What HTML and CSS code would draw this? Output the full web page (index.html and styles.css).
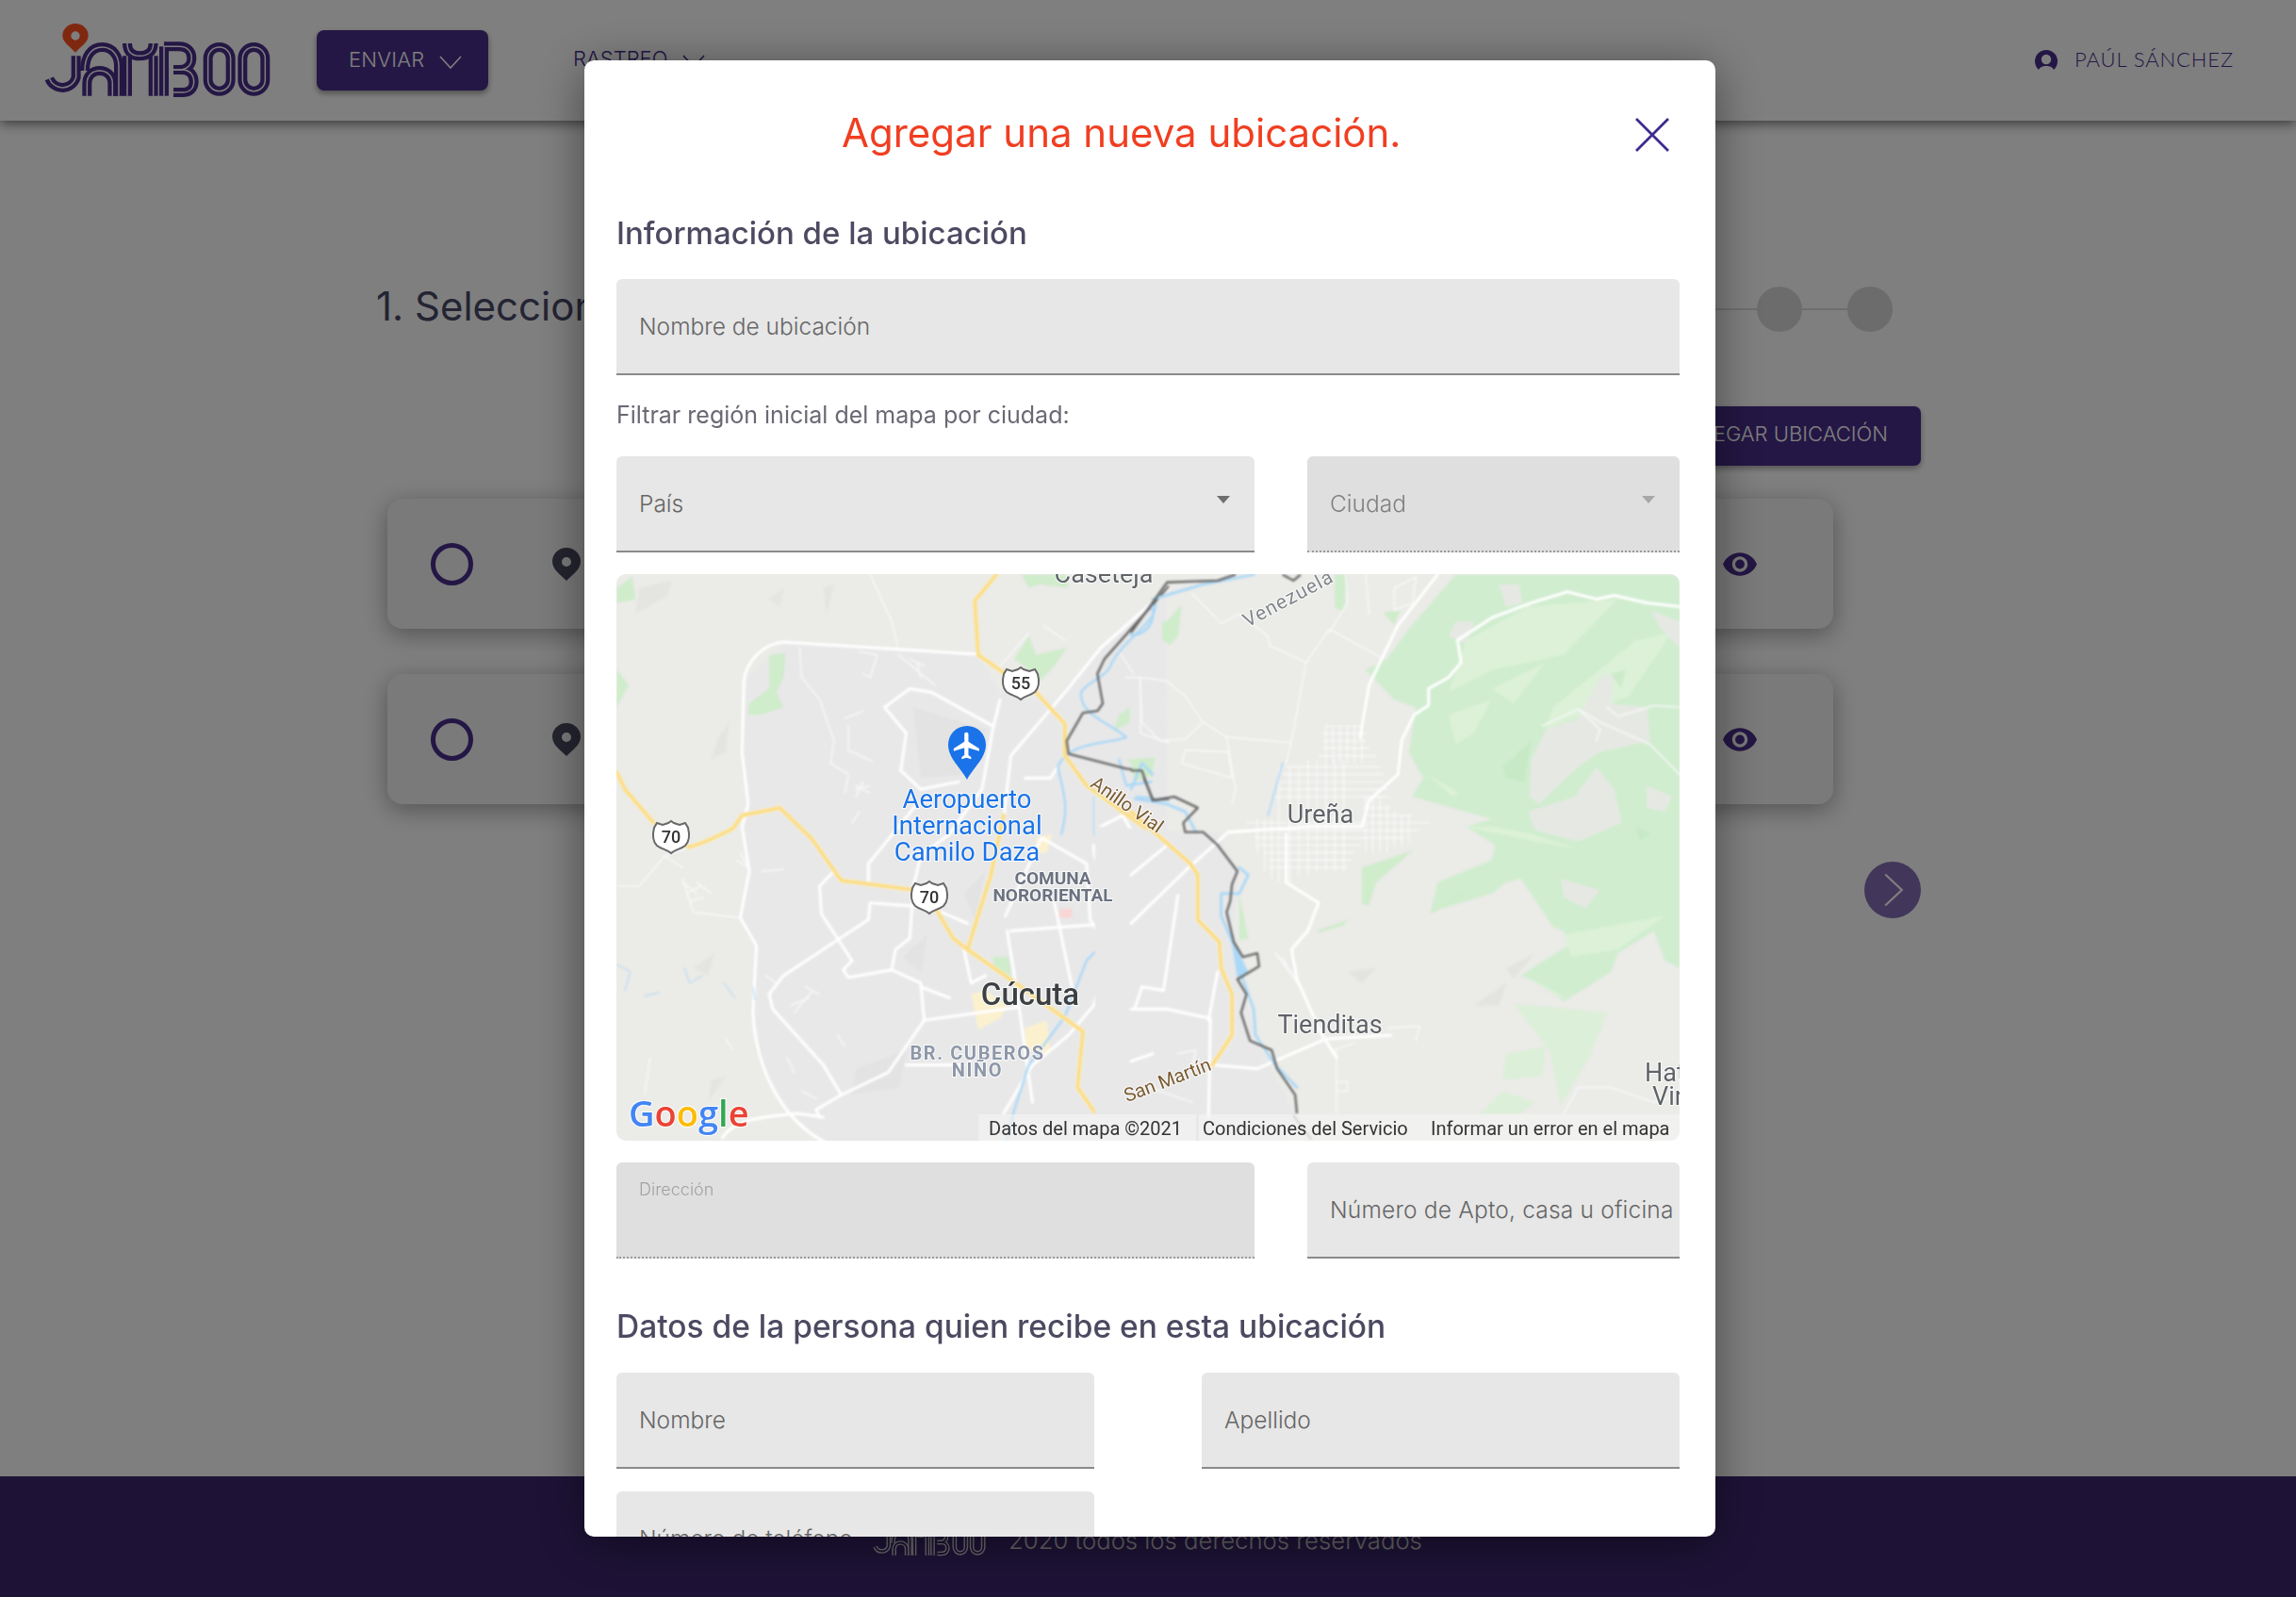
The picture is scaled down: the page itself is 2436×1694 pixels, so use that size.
FILE: index.html
```html
<!DOCTYPE html>
<html lang="es">
<head>
<meta charset="utf-8">
<title>Jamboo</title>
<link rel="stylesheet" href="styles.css">
</head>
<body>
<svg class="defs" width="0" height="0" aria-hidden="true">
  <defs>
    <g id="jamboo-lines">
      <path d="M122 118V187A45 45 0 0 1 37 190"/>
      <path d="M150 165C150 120 170 90 205 90S258 120 258 150V245"/>
      <path d="M157 245V205C157 180 175 165 197 165S238 180 238 205V245"/>
      <path d="M285 78C285 105 300 118 325 118S368 105 368 78"/>
      <path d="M285 118V245M368 118V245"/>
      <path d="M402 88V245"/>
      <path d="M402 88H450C478 88 490 105 490 125S478 162 450 162H432"/>
      <path d="M432 162H460C485 162 497 180 497 200S485 234 460 234H432"/>
      <rect x="542" y="90" width="72" height="140" rx="36"/>
      <rect x="652" y="90" width="72" height="140" rx="36"/>
    </g>
    <g id="shield">
      <path d="M-15 -15L-9 -13L-3 -15L0 -17L3 -15L9 -13L15 -15L18 -10C20 -2 19 5 15 9C10 13 4 13 0 17C-4 13 -10 13 -15 9C-19 5 -20 -2 -18 -10Z" fill="#fff" stroke="#686868" stroke-width="2"/>
    </g>
    <g id="hw-left" fill="none" stroke-linecap="round" stroke-linejoin="round">
      <path d="M1090 24L1030 95L1040 240L1115 290M1200 340L1280 425L1280 510L1340 590L1568 750"/>
      <path d="M38 555L60 600L140 690M235 755C270 750 330 720 360 705L385 670L490 650L580 735L660 845L860 870"/>
      <path d="M925 925L970 1000L1010 1030L1150 1125L1330 1250L1315 1400L1400 1520"/>
      <path d="M1110 670L1075 830L1010 1030"/>
      <path d="M1450 1430V1560"/>
    </g>
    <g id="hw-right" fill="none" stroke-linecap="round" stroke-linejoin="round">
      <path d="M0 660L165 800L185 830L185 950L245 1010L250 1080L280 1150L280 1260L225 1340"/>
    </g>
  </defs>
</svg>

<div class="page">
  <header class="topbar">
    <svg class="logo" viewBox="0 0 780 270">
      <g class="logo-wide"><use href="#jamboo-lines"/></g>
      <g class="logo-thin"><use href="#jamboo-lines"/></g>
      <path class="logo-pin" d="M120 107C100 85 79 74 79 53A41 38 0 0 1 161 53C161 74 140 85 120 107ZM120 40A14 14 0 1 0 120 68A14 14 0 1 0 120 40Z"/>
    </svg>
    <button class="send-btn">ENVIAR
      <svg class="chev" viewBox="0 0 24 14"><path d="M1 1L12 13L23 1"/></svg>
    </button>
    <div class="track">RASTREO
      <svg class="chev" viewBox="0 0 24 14"><path d="M1 1L12 13L23 1"/></svg>
    </div>
    <div class="user">
      <svg class="user-icon" viewBox="0 0 24 24"><circle cx="12" cy="12" r="12" class="user-disc"/><circle cx="12" cy="10" r="5.200" class="user-face"/><path class="user-face" d="M3 24C4 18 8 17 12 17S20 18 21 24Z"/></svg>
      <span>PAÚL SÁNCHEZ</span>
    </div>
  </header>

  <main class="content">
    <div class="step-row">
      <h1 class="step-title">1. Selecciona el punto de recogida</h1>
      <div class="stepper">
        <span class="step-line"></span><span class="step-dot"></span><span class="step-line short"></span><span class="step-dot"></span>
      </div>
    </div>
    <div class="add-row"><button class="add-btn">AGREGAR UBICACIÓN</button></div>
    <div class="cards">
      <div class="card">
        <span class="radio"></span>
        <svg class="pin" viewBox="0 0 30 35"><path d="M15 35C8 28 0 23 0 14.500A15 14.500 0 0 1 30 14.500C30 23 22 28 15 35ZM15 10A5 5 0 1 0 15 20A5 5 0 1 0 15 10Z" fill-rule="evenodd"/></svg>
        <svg class="eye" viewBox="1 4.500 22 15"><path d="M12 4.500C7 4.500 2.730 7.610 1 12c1.730 4.390 6 7.500 11 7.500s9.270-3.110 11-7.500c-1.730-4.390-6-7.500-11-7.500zM12 17c-2.760 0-5-2.240-5-5s2.240-5 5-5 5 2.240 5 5-2.240 5-5 5zm0-8c-1.660 0-3 1.340-3 3s1.340 3 3 3 3-1.340 3-3-1.340-3-3-3z"/></svg>
      </div>
      <div class="card">
        <span class="radio"></span>
        <svg class="pin" viewBox="0 0 30 35"><path d="M15 35C8 28 0 23 0 14.500A15 14.500 0 0 1 30 14.500C30 23 22 28 15 35ZM15 10A5 5 0 1 0 15 20A5 5 0 1 0 15 10Z" fill-rule="evenodd"/></svg>
        <svg class="eye" viewBox="1 4.500 22 15"><path d="M12 4.500C7 4.500 2.730 7.610 1 12c1.730 4.390 6 7.500 11 7.500s9.270-3.110 11-7.500c-1.730-4.390-6-7.500-11-7.500zM12 17c-2.760 0-5-2.240-5-5s2.240-5 5-5 5 2.240 5 5-2.240 5-5 5zm0-8c-1.660 0-3 1.340-3 3s1.340 3 3 3 3-1.340 3-3-1.340-3-3-3z"/></svg>
      </div>
    </div>
    <div class="next-row">
      <button class="next-btn"><svg viewBox="0 0 20 32"><path d="M2 1L18 16L2 31"/></svg></button>
    </div>
  </main>

  <footer class="footer">
    <svg class="footer-logo" viewBox="0 0 780 270">
      <g class="flogo-wide"><use href="#jamboo-lines"/></g>
      <g class="flogo-thin"><use href="#jamboo-lines"/></g>
    </svg>
    <span>2020 todos los derechos reservados</span>
  </footer>
</div>

<div class="overlay">
  <section class="modal">
    <div class="modal-head">
      <h2 class="modal-title">Agregar una nueva ubicación.</h2>
      <svg class="close" viewBox="0 0 36 36"><path d="M1 1L35 35M35 1L1 35"/></svg>
    </div>
    <h3 class="section-title first">Información de la ubicación</h3>
    <div class="field gap-a"><span>Nombre de ubicación</span></div>
    <p class="hint">Filtrar región inicial del mapa por ciudad:</p>
    <div class="row-wide gap-a">
      <div class="field select"><span>País</span><i class="caret"></i></div>
      <div class="field select disabled"><span>Ciudad</span><i class="caret"></i></div>
    </div>

    <div class="map">
      <svg class="map-art" viewBox="0 0 1128 601">
        <rect width="1128" height="601" fill="#ebebe8"/>
        <g class="map-ground">
        <!-- left half, drawn in the 3x crop coordinates -->
        <g transform="translate(-14 -9) scale(.3827 .3953)">
          <g fill="#e4e4e1">
            <path d="M100 60L190 40L180 80L90 130Z"/>
            <path d="M320 460L350 420L340 500L300 520Z"/>
            <path d="M450 500L520 450L500 540L430 560Z"/>
            <path d="M250 1080L310 1040L290 1100Z"/>
            <path d="M610 60L640 50L620 130Z"/>
            <path d="M460 90L500 60L490 110Z"/>
            <path d="M300 1380L340 1370L290 1440Z"/>
          </g>
          <path fill="#e8e8e9" d="M400 300L500 210L1040 240L1100 340L1250 360L1400 200L1560 80L1568 1560L640 1560L520 1470L440 1340L415 1200L425 1020L380 950L405 820L385 700L400 640L385 500Z"/>
          <g fill="#e3e3e3">
            <path d="M860 380L1060 440L1010 560L880 570Z"/>
            <path d="M700 1350L840 1300L820 1400L690 1420Z"/>
            <path d="M830 1050L900 990L880 1090Z"/>
            <path d="M1000 880L1060 820L1030 950Z"/>
          </g>
          <g fill="#cfeccb">
            <path d="M38 60L80 30L90 90L38 100Z"/>
            <path d="M460 240L505 235L500 300L480 340L500 380L440 400L400 400L405 370L460 330Z"/>
            <path d="M38 280L70 320L38 380Z"/>
            <path d="M1160 24L1280 24L1290 60L1210 50L1180 60Z"/>
            <path d="M1180 190L1200 240L1285 220L1250 270L1200 320L1180 280L1140 250Z"/>
            <path d="M1460 380L1460 420L1415 445L1430 400Z"/>
            <path d="M1550 150L1568 150L1568 210L1550 200Z"/>
            <path d="M1450 520L1530 515L1520 570L1490 550Z"/>
            <path d="M1080 1050L1125 1050L1130 1100L1085 1090Z"/>
          </g>
          <g fill="#fbf1cf">
            <path d="M1020 1150L1060 1140L1120 1180L1100 1215L1040 1245L1030 1200Z"/>
            <path d="M1170 1240L1230 1220L1240 1310L1170 1300Z"/>
            <path d="M1200 730L1245 720L1230 770L1200 770Z"/>
          </g>
          <path fill="#f9d6d6" d="M1265 920H1300V945H1265Z"/>
          <g fill="none" stroke="#f8f8f8" stroke-linecap="round" stroke-linejoin="round" stroke-width="4">
            <path d="M740 24L800 150L820 230"/>
            <path d="M545 220L550 300L600 360L640 470L630 530L680 560L670 610"/>
            <path d="M670 410L720 390M680 430L680 495L745 525M700 590L740 610M690 690L710 660"/>
            <path d="M240 755L170 780L100 860L40 860M170 780L220 810M220 840L250 930L380 945"/>
            <path d="M220 850L260 880M230 880L270 860M240 900L280 890M260 850L300 880"/>
            <path d="M370 790L400 810M380 770L395 800M440 820L500 815"/>
            <path d="M1450 300L1490 300L1490 450L1568 475M1430 230L1470 290"/>
            <path d="M1220 160L1280 200M1100 270L1180 180"/>
            <path d="M130 1320L115 1420"/>
            <path d="M820 240L880 290L920 320M850 250L890 270M870 260L880 300"/>
            <path d="M710 230L760 240L740 300L720 290"/>
            <path d="M520 1180L570 1160M530 1200L580 1140M560 1130L600 1150M450 1100L480 1120"/>
            <path d="M510 1320L530 1360M550 1410L590 1430M650 1260L670 1290M340 1270L360 1300"/>
            <path d="M700 600L740 590M720 580L700 620"/>
          </g>
          <g fill="none" stroke="#fff" stroke-linecap="round" stroke-linejoin="round" stroke-width="8">
            <path d="M1040 238L500 205C440 210 395 260 390 310L385 500L402 640L385 700L405 820L380 945L425 1020L415 1200C425 1360 500 1500 640 1560"/>
            <path d="M1100 360L1080 440L1050 600L960 720L880 780L860 860L850 1000L810 1030L800 1085L680 1105L665 1085L690 1060L605 935L600 860L640 820"/>
            <path d="M780 380L850 330L910 340L1080 430M780 380L840 450L825 550L880 600L985 580"/>
            <path d="M1568 60L1380 220L1280 340L1130 510L1115 640M1115 640L1110 680"/>
            <path d="M735 855V800L870 640M740 905L735 950L500 1100L460 1150L470 1190L610 1340L660 1420L590 1460L600 1480"/>
            <path d="M740 905L880 915M925 925L1010 960"/>
            <path d="M1130 980L1410 960M1115 940L1215 730L1340 800L1350 950L1400 1030"/>
            <path d="M1568 870L1410 1020L1370 1195L1568 1190M1400 1030L1360 1180L1290 1260L1190 1340L1110 1470"/>
            <path d="M1120 980L1145 1130L1190 1440M1250 900L1310 1180M1000 1030L1020 1120L1060 1100"/>
            <path d="M800 1085L880 1120L890 1220L1150 1185M880 1130L960 1160"/>
            <path d="M890 1220L790 1360L660 1420M840 1340H1000"/>
            <path d="M330 1535C360 1490 420 1480 540 1470L610 1480"/>
            <path d="M1360 750C1350 850 1500 850 1568 800M1380 700L1440 670L1500 770"/>
            <path d="M1170 570L1240 570L1260 540"/>
          </g>
          <g fill="none" stroke="#aad8f7" stroke-linecap="round" stroke-linejoin="round" stroke-width="6">
            <path d="M1530 100C1540 150 1450 190 1410 260C1400 300 1340 310 1325 340C1320 400 1400 420 1450 460C1400 480 1290 470 1260 540C1280 620 1290 650 1270 720"/>
            <path d="M1430 520L1450 590L1520 580M1480 620L1568 630"/>
            <path d="M1420 920L1400 1000L1340 1060L1280 1210L1180 1340L1140 1460L1120 1540"/>
            <path d="M1360 620L1360 720L1400 760" stroke-width="3"/>
            <path d="M38 1070L75 1090L60 1140M115 1155L155 1145M225 1080L240 1120L275 1100M335 1120L365 1160M415 1130L420 1165" stroke-width="2.500"/>
          </g>
          <use href="#hw-left" class="hw-case"/>
          <use href="#hw-left" class="hw-fill"/>
          <path class="border-line" d="M1568 55L1500 130L1390 250L1370 290L1385 370L1370 390L1330 395L1285 470L1290 505L1450 545L1490 550L1525 630L1568 625"/>
        </g>

        <!-- right half, drawn in the 3x crop coordinates -->
        <g transform="translate(546 -9) scale(.3827 .3953)">
          <path fill="#e8e8e9" d="M-100 700L240 720L300 820L280 1010L350 1280L460 1480L400 1560L-100 1560Z"/>
          <path fill="#d0edcf" d="M770 170L900 24L1521 24L1521 1080L1480 1060L1450 980L1350 1040L1330 1090L1200 1170L1150 1130L1080 1100L1210 1020L1200 980L1170 970L1130 910L1080 840L1040 850L1000 880L830 930L850 850L1000 790L1010 750L930 700L1000 680L780 620L810 570L770 500L790 380L730 360L650 280L710 250Z"/>
          <g fill="#dcf1d8">
            <path d="M930 200L1100 110L1350 90L1200 240L1000 280L880 340Z"/>
            <path d="M1000 330L1150 260L1060 370Z"/>
            <path d="M1170 380L1400 200L1500 180L1380 350L1150 440Z"/>
            <path d="M1200 990L1480 940L1350 1030L1220 1050Z"/>
            <path d="M920 700L1020 720L1120 740L1240 760L1110 720L1000 700Z"/>
            <path d="M820 560L910 610L890 620Z"/>
            <path d="M880 400L1000 360L950 450L900 480Z"/>
          </g>
          <g fill="#e6e9e3">
            <path d="M1105 620L1110 520L1150 440L1240 410L1300 300L1340 290L1330 370L1430 380L1440 470L1300 500L1240 540L1130 640Z"/>
            <path d="M1230 620L1290 540L1340 600L1360 690L1240 740L1120 710L1100 660Z"/>
            <path d="M1430 590L1500 620L1480 660L1430 650Z"/>
            <path d="M1190 840L1300 870L1260 920L1200 890Z"/>
            <path d="M1020 50L1075 50L1085 100L1040 110Z"/>
            <path d="M900 150L950 150L930 210L880 190Z"/>
            <path d="M1440 120L1521 150L1521 220L1470 170Z"/>
          </g>
          <g fill="#c6e8c3" opacity=".7">
            <path d="M1030 540L1110 470L1090 580L1040 570Z"/>
            <path d="M1330 290L1370 280L1360 330Z"/>
            <path d="M1400 700L1440 720L1410 740Z"/>
          </g>
          <g fill="#cfeccb">
            <path d="M640 810L780 765L680 850L660 910L640 910Z"/>
            <path d="M830 930L930 860L920 890L830 935Z"/>
            <path d="M515 980L600 950L590 965L520 985Z"/>
            <path d="M565 24L600 24L590 125L565 110Z"/>
            <path d="M85 165L140 105L130 190L105 215Z"/>
            <path d="M0 530L50 520L60 560L10 580Z"/>
            <path d="M700 125L745 120L730 160Z"/>
            <path d="M300 880L325 1000L300 1005Z"/>
          </g>
          <g fill="#dcefd8">
            <path d="M1060 1175L1320 1200L1270 1320L1190 1450L1160 1300Z"/>
            <path d="M1040 1310L1150 1290L1140 1370L1030 1380Z"/>
            <path d="M970 1470L1030 1410L1120 1440L1080 1470Z"/>
            <path d="M1090 1100L1150 1130L1230 1170L1170 1150Z"/>
          </g>
          <g fill="#e3e3e0">
            <path d="M1040 1080L1120 1040L1060 1110Z"/>
            <path d="M950 1180L1040 1120L1020 1180Z"/>
            <path d="M600 1090L680 1080L640 1120Z"/>
          </g>
          <g fill="none" stroke="#f8f8f8" stroke-linecap="round" stroke-linejoin="round" stroke-width="4">
            <path d="M170 75L250 155L300 130L380 190L385 215L485 260L550 170L690 245M485 260L445 470L430 530"/>
            <path d="M595 24L600 100L550 180M650 24L660 130M730 60L790 30L780 100L730 120L730 60"/>
            <path d="M25 300L30 420L80 470L150 465L200 420L265 460L445 475M265 460L290 600L280 640M200 420L150 350L100 310L25 300"/>
            <path d="M150 495L270 500L280 570L140 530Z"/>
            <path d="M1140 430L1240 385L1300 440L1290 470M1320 380L1350 405L1450 375L1520 380M1240 385L1300 420L1440 480L1520 560"/>
            <path d="M710 1240L800 1235L790 1275M400 1040L460 1110M570 1300V1470M1240 1400L1330 1400L1450 1440L1521 1420M1240 1400L1200 1470"/>
            <path d="M50 1400L170 1440M130 1310L180 1300L170 1340"/>
            <path d="M400 1040L470 1130M420 1050L440 1090M560 1300L620 1280M570 1385H600V1410H570Z"/>
          </g>
          <!-- Ureña street grid -->
          <g fill="none" stroke="#fbfbfb" stroke-width="3">
            <path d="M540 430H640M530 450H650M530 470H650M530 490H660M520 510H680M430 540H690M420 560H700M415 580H700M410 600H710M400 620H715M320 690H830M340 710H800M340 730H760M350 750H640M370 770H620M380 790H610M380 810H600M640 650H720M650 670H780"/>
            <path d="M540 430V530M560 430V530M580 430V530M600 430V530M620 430V530M640 430V530M350 680V770M370 680V820M390 680V840M410 540V850M440 540V850M465 540V830M490 520V830M515 520V820M540 520V820M565 520V820M590 520V820M650 620V770M670 620V770M690 620V770M710 640V770M730 660V750M750 670V750M770 670V740"/>
          </g>
          <g fill="none" stroke="#fff" stroke-linecap="round" stroke-linejoin="round" stroke-width="8">
            <path d="M850 24L740 160L660 320L635 460"/>
            <path d="M1521 110L1430 100L1340 80L1290 90L1210 70L1110 100L1000 140L905 200L915 260L880 300L825 330L825 375L785 400L750 470L740 560L660 630L640 700L500 700L270 715L160 810L0 960"/>
            <path d="M430 850L520 905L490 980L445 1030L460 1110L530 1260L570 1320"/>
            <path d="M230 1340L350 1350L540 1270L720 1260"/>
            <path d="M0 830L100 750M0 1190L100 1190L220 1215L215 1480M240 1090L215 1220"/>
            <path d="M130 885L90 1140L30 1130L10 1190"/>
            <path d="M0 1330L60 1310"/>
            <path d="M430 720V850"/>
          </g>
          <g fill="none" stroke="#aad8f7" stroke-linecap="round" stroke-linejoin="round" stroke-width="7">
            <path d="M60 110C70 170 20 190 0 185M60 90L200 50L340 24"/>
            <path d="M60 560L30 530L0 600M10 625L100 640L150 660L180 715"/>
            <path d="M300 810L325 830L300 880L250 880L250 940L290 1030L310 1110L340 1190L345 1260L400 1340L460 1400"/>
            <path d="M420 530L380 670" stroke-width="4"/>
          </g>
          <path fill="#aad8f7" d="M265 920L290 1020L325 1090L295 1110Z"/>
          <use href="#hw-right" class="hw-case"/>
          <use href="#hw-right" class="hw-fill"/>
          <path class="border-line" d="M0 180L100 45L240 40L290 24M420 24L450 40L470 24M0 550L30 550L60 630L120 620L185 650L145 690L150 715L200 715L240 750L295 820L280 855L275 900L265 930L285 1010L310 1050L350 1040L355 1075L295 1110L320 1150L305 1200L330 1275L390 1300L405 1350L455 1420L460 1470"/>
          <path fill="none" stroke="#9a9a9a" stroke-width="5" d="M450 1475L500 1540"/>
        </g>
        </g>

        <g class="map-labels">
        <!-- shields -->
        <g transform="translate(429 116)"><use href="#shield"/><text class="shield-text" y="6">55</text></g>
        <g transform="translate(58 279)"><use href="#shield"/><text class="shield-text" y="6">70</text></g>
        <g transform="translate(332 343)"><use href="#shield"/><text class="shield-text" y="6">70</text></g>

        <!-- airport -->
        <path fill="#1a73e8" d="M372 218C365 205 352 195 352 181A20 20 0 0 1 392 181C392 195 379 205 372 218Z"/>
        <path fill="#fff" transform="translate(355 165) scale(1.420)" d="M21 16v-2l-8-5V3.500c0-.830-.670-1.500-1.500-1.500S10 2.670 10 3.500V9l-8 5v2l8-2.500V19l-2 1.500V22l3.500-1 3.500 1v-1.500L13 19v-5.500l8 2.500z"/>

        <!-- labels -->
        <text class="t blue" x="372" y="248">Aeropuerto</text>
        <text class="t blue" x="372" y="276">Internacional</text>
        <text class="t blue" x="372" y="304">Camilo Daza</text>
        <text class="t gray" x="517" y="9">Caseteja</text>
        <text class="t gray" x="747" y="264">Ureña</text>
        <text class="t gray" x="757" y="487">Tienditas</text>
        <text class="t gray start" x="1091" y="538">Hat</text>
        <text class="t gray start" x="1099" y="563">Vir</text>
        <text class="t city" x="439" y="457">Cúcuta</text>
        <text class="t area" x="463" y="329">COMUNA</text>
        <text class="t area" x="463" y="347">NORORIENTAL</text>
        <text class="t area light" x="383" y="515">BR. CUBEROS</text>
        <text class="t area light" x="383" y="533">NIÑO</text>
        <text class="t road" transform="translate(538 250) rotate(35)">Anillo Vial</text>
        <text class="t road" transform="translate(587 543) rotate(-21)">San Martín</text>
        <text class="t country" transform="translate(716 32) rotate(-28)">Venezuela</text>

        <!-- google -->
        <text class="google" x="13" y="586"><tspan fill="#4285f4">G</tspan><tspan fill="#ea4335">o</tspan><tspan fill="#fbbc05">o</tspan><tspan fill="#4285f4">g</tspan><tspan fill="#34a853">l</tspan><tspan fill="#ea4335">e</tspan></text>

        <!-- attribution -->
        <rect x="384" y="573" width="231" height="28" fill="#f5f5f5" fill-opacity=".6"/>
        <rect x="618" y="573" width="510" height="28" fill="#f5f5f5" fill-opacity=".6"/>
        <text class="attr" x="395" y="595">Datos del mapa ©2021</text>
        <text class="attr" x="622" y="595">Condiciones del Servicio</text>
        <text class="attr" x="864" y="595">Informar un error en el mapa</text>
        </g>
      </svg>
    </div>

    <div class="row-wide gap-b">
      <div class="field disabled labelled"><small>Dirección</small></div>
      <div class="field nopad apto"><span>Número de Apto, casa u oficina</span></div>
    </div>
    <h3 class="section-title second">Datos de la persona quien recibe en esta ubicación</h3>
    <div class="row-even gap-a">
      <div class="field"><span>Nombre</span></div>
      <div class="field"><span>Apellido</span></div>
    </div>
    <div class="row-even gap-c">
      <div class="field"><span>Número de teléfono</span></div>
    </div>
  </section>
</div>
</body>
</html>
```
FILE: styles.css
```css
* { box-sizing: border-box; }
html, body { margin: 0; height: 100%; overflow: hidden; }
body { font-family: "Inter", "Liberation Sans", sans-serif; background: #fff; color: #5a5a7e; }
.defs { position: absolute; }
button { font-family: inherit; border: 0; }

.page { height: 1694px; display: flex; flex-direction: column; }

/* top bar */
.topbar { height: 128px; flex: none; display: flex; align-items: flex-start; padding-left: 40px; background: #fff; box-shadow: 0 3px 12px rgba(0, 0, 0, .55); position: relative; }
.logo { width: 260px; height: 90px; margin-top: 20px; flex: none; }
.logo-wide { fill: none; stroke: #482e8a; stroke-width: 30; }
.logo-thin { fill: none; stroke: #fff; stroke-width: 4.500; }
.logo-pin { fill: #ff5020; fill-rule: evenodd; }
.send-btn { margin: 32px 0 0 36px; width: 182px; height: 64px; border-radius: 8px; background: #482e8a; color: #fff; font-size: 22px; font-weight: 300; letter-spacing: .2px; display: flex; align-items: center; padding: 0 0 3px 34px; box-shadow: 0 3px 6px rgba(0, 0, 0, .4); }
.chev { width: 24px; height: 14px; fill: none; stroke: currentColor; stroke-width: 1.600; margin-left: 16px; position: relative; top: 3px; }
.track { margin: 46px 0 0 90px; font-size: 22px; font-weight: 300; color: #482e8a; display: flex; align-items: center; line-height: 32px; }
.user { margin: 44px 66px 0 auto; display: flex; align-items: center; font-family: "Lato", sans-serif; font-size: 22px; font-weight: 300; letter-spacing: .9px; color: #482e8a; height: 36px; gap: 18px; }
.user-icon { width: 24px; height: 24px; position: relative; top: 3px; }
.user-disc { fill: #482e8a; }
.user-face { fill: #fff; }

/* page content */
.content { flex: 1; padding: 176px 398px 0 399px; }
.step-row { display: flex; justify-content: space-between; height: 48px; }
.step-title { margin: 0; font-size: 42px; font-weight: 400; line-height: 42px; color: #484868; white-space: nowrap; }
.stepper { display: flex; align-items: center; margin-right: 30px; }
.step-line { width: 100px; height: 2px; background: #ddd; }
.step-line.short { width: 48px; }
.step-dot { width: 48px; height: 48px; border-radius: 50%; background: #d8d8d8; }
.add-row { display: flex; justify-content: flex-end; margin-top: 79px; }
.add-btn { width: 320px; height: 63px; border-radius: 7px; background: #482e8a; color: #fff; font-size: 22px; font-weight: 300; text-align: right; padding: 0 35px 6px 0; box-shadow: 0 3px 6px rgba(0, 0, 0, .35); }
.cards { margin: 35px 0 0 12px; width: 1534px; display: flex; flex-direction: column; gap: 48px; }
.card { height: 138px; background: #f4f4f4; border-radius: 16px; display: flex; align-items: center; padding: 0 81px 0 46px; box-shadow: 0 6px 26px rgba(0, 0, 0, .35); }
.radio { width: 45px; height: 45px; border: 5px solid #482e8a; border-radius: 50%; flex: none; }
.pin { width: 30px; height: 35px; margin-left: 84px; fill: #494960; flex: none; }
.eye { width: 36px; height: 25px; margin-left: auto; fill: #482e8a; flex: none; }
.next-row { display: flex; justify-content: flex-end; margin-top: 61px; }
.next-btn { width: 60px; height: 60px; border-radius: 50%; background: #846cb4; padding: 0; display: flex; align-items: center; justify-content: center; }
.next-btn svg { width: 22px; height: 38px; fill: none; stroke: #fff; stroke-width: 2; margin-left: 2px; }

/* footer */
.footer { height: 128px; flex: none; background: #3c266e; color: #ccc; display: flex; align-items: flex-start; padding-left: 922px; font-size: 25.700px; font-weight: 300; }
.footer-logo { width: 131px; height: 45px; margin-top: 43px; flex: none; }
.flogo-wide { fill: none; stroke: #d8d8d8; stroke-width: 28; }
.flogo-thin { fill: none; stroke: #3c266e; stroke-width: 11; }
.footer span { margin: 51px 0 0 17px; line-height: 34px; }

/* modal */
.overlay { position: fixed; inset: 0; background: rgba(0, 0, 0, .5); padding: 64px 0 0 620px; }
.modal { width: 1200px; height: 1566px; background: #fff; border-radius: 10px; overflow: hidden; padding: 0 38px 0 34px; box-shadow: 0 8px 50px rgba(0, 0, 0, .45); color: #4c4a61; }
.modal-head { display: flex; align-items: center; justify-content: space-between; padding: 50px 11px 0 239px; height: 104px; }
.modal-title { margin: 0; font-size: 42px; font-weight: 400; line-height: 54px; color: #f03e21; white-space: nowrap; }
.close { width: 36px; height: 36px; fill: none; stroke: #3f2a8c; stroke-width: 2.800; flex: none; margin-top: 3px; }
.section-title { margin: 0; font-size: 33.500px; font-weight: 500; line-height: 40px; color: #4c4a61; white-space: nowrap; }
.section-title.first { margin-top: 59px; font-size: 33px; }
.section-title.second { margin-top: 52px; }
.hint { margin: 27px 0 0; font-size: 25px; line-height: 30px; color: #696975; }
.gap-a { margin-top: 29px; }
.gap-b { margin-top: 23px; }
.gap-c { margin-top: 24px; }
.field { height: 102px; background: #e7e7e7; border-bottom: 2px solid #8a8a8a; border-radius: 6px 6px 0 0; padding: 0 24px; display: flex; align-items: center; justify-content: space-between; font-size: 24.500px; font-weight: 300; color: #666; white-space: nowrap; position: relative; }
.field.nopad { padding-right: 0; }
.field.apto { letter-spacing: .2px; }
.field.disabled { background: #dfdfdf; border-bottom: 2px dotted #9a9a9a; color: #808080; }
.field.labelled { align-items: flex-start; padding-top: 17px; }
.field small { font-size: 18px; line-height: 24px; color: #a2a2a2; }
.caret { width: 0; height: 0; border: 7px solid transparent; border-top: 8px solid #6e6e6e; border-bottom: 0; position: absolute; right: 26px; top: 42px; }
.disabled .caret { border-top-color: #a8a8a8; }
.row-wide { display: grid; grid-template-columns: 677px 395px; column-gap: 56px; }
.row-even { display: grid; grid-template-columns: 507px 507px; column-gap: 114px; }
.map { height: 601px; margin-top: 23px; border-radius: 10px; overflow: hidden; }
.map-art { display: block; width: 1128px; height: 601px; }
.map-ground { filter: blur(1px); }
.map-labels { filter: blur(.4px); }
.hw-case { stroke: #f7f3df; stroke-width: 14; }
.hw-fill { stroke: #fcdd85; stroke-width: 10; }
.border-line { fill: none; stroke: #666; stroke-width: 6; stroke-linejoin: round; }

/* map labels */
.t { font-family: "Roboto", sans-serif; text-anchor: middle; paint-order: stroke; stroke: #fff; stroke-width: 2px; stroke-opacity: .8; }
.t.start { text-anchor: start; }
.blue { font-size: 27.500px; fill: #1a73e8; }
.gray { font-size: 27px; fill: #5f6368; }
.city { font-size: 33px; font-weight: 500; fill: #3c4043; }
.area { font-size: 19px; font-weight: 700; fill: #6b7280; }
.area.light { font-size: 20px; letter-spacing: 1.600px; fill: #8d97a8; }
.road { font-size: 20px; fill: #7a5a30; }
.country { font-size: 21px; letter-spacing: 1px; fill: #80868b; }
.shield-text { font-family: "Roboto", sans-serif; font-size: 18px; font-weight: 500; text-anchor: middle; fill: #333; }
.google { font-family: "Open Sans", sans-serif; font-size: 38px; font-weight: 600; paint-order: stroke; stroke: #fff; stroke-width: 2px; }
.attr { font-family: "Roboto", sans-serif; font-size: 20px; fill: #333; }
```
